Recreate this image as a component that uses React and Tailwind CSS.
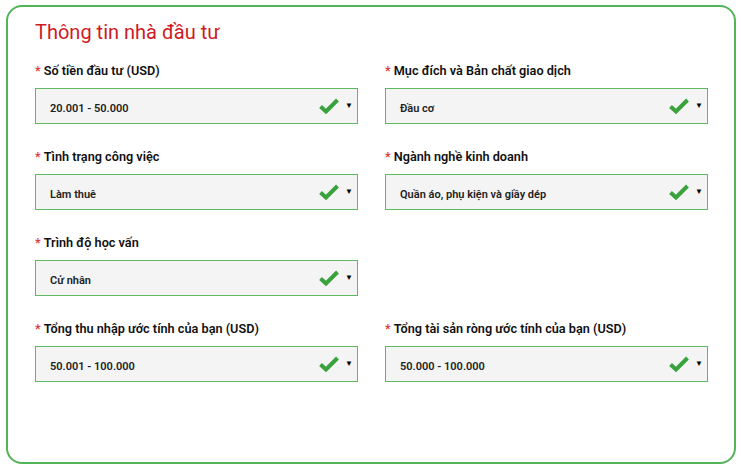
export default function App() {
  const fields = [
    { label: "Số tiền đầu tư (USD)", value: "20.001 - 50.000" },
    { label: "Mục đích và Bản chất giao dịch", value: "Đầu cơ" },
    { label: "Tình trạng công việc", value: "Làm thuê" },
    { label: "Ngành nghề kinh doanh", value: "Quần áo, phụ kiện và giầy dép" },
    { label: "Trình độ học vấn", value: "Cử nhân" },
    null,
    { label: "Tổng thu nhập ước tính của bạn (USD)", value: "50.001 - 100.000" },
    { label: "Tổng tài sản ròng ước tính của bạn (USD)", value: "50.000 - 100.000" },
  ];

  return (
    <div className="w-[742px] h-[470px] bg-white pt-[5px] pl-[6px]" style={{ fontFamily: "Roboto, 'Liberation Sans', sans-serif" }}>
      <div className="w-[730px] h-[459px] border-2 border-[#52b456] rounded-[16px] pt-[13px] pl-[27px]">
        <h1 className="text-[20px] leading-[24px] text-[#cf1a24]">Thông tin nhà đầu tư</h1>
        <div className="grid grid-cols-[323px_323px] gap-x-[27px] gap-y-[25px] mt-[19px]">
          {fields.map((f, i) =>
            f ? (
              <div key={i} className="flex flex-col gap-[9px]">
                <div className="text-[12.7px] leading-[16px] font-semibold text-[#111]">
                  <span className="text-[#e0383e] mr-[3px]">*</span>
                  {f.label}
                </div>
                <div className="h-[36px] border border-[#5fb862] bg-[#f4f4f4] flex items-center pl-[14px] pr-[4px]">
                  <span className="flex-1 text-[11px] font-semibold text-[#222] pt-[7px]">{f.value}</span>
                  <svg width="20" height="16" viewBox="0 0 20 16" className="mr-[6px]">
                    <path d="M1.5 8.5 L7 13.5 L18.5 2" fill="none" stroke="#3aa23c" strokeWidth="4" strokeLinejoin="miter" />
                  </svg>
                  <span className="text-[8px] text-black leading-none -mt-[1px]">▼</span>
                </div>
              </div>
            ) : (
              <div key={i} />
            )
          )}
        </div>
      </div>
    </div>
  );
}
